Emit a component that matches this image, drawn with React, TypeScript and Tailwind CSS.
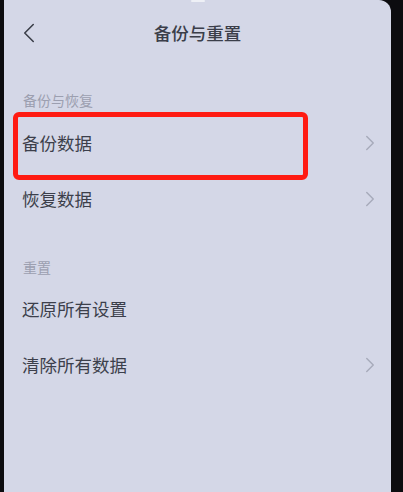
import { ChevronLeft, ChevronRight } from "lucide-react";

const font = { fontFamily: '"Noto Sans CJK SC", "Noto Sans", sans-serif' };

function Row({ label, arrow, marked }: { label: string; arrow?: boolean; marked?: boolean }) {
  return (
    <div className="relative flex h-[56px] items-center justify-between pl-[18px] pr-[8px]">
      <span className="text-[17.5px] leading-none text-[#3c3f4b]">{label}</span>
      {arrow && <ChevronRight className="size-[26px] text-[#a7aaba]" strokeWidth={1.3} />}
      {marked && (
        <div className="absolute left-[9px] top-[-3px] h-[68px] w-[295px] rounded-[6px] border-[5px] border-[#ff1b12]" />
      )}
    </div>
  );
}

function Section({ title }: { title: string }) {
  return (
    <div className="pl-[19px] text-[14px] leading-[20px] text-[#9c9fb0]">{title}</div>
  );
}

export default function App() {
  return (
    <div className="flex h-[492px] w-[403px] bg-[#0c0c0f]" style={font}>
      <div className="relative ml-[4px] flex w-[387px] flex-col rounded-tr-[12px] bg-[#d4d7e7]">
        <div className="absolute left-[187px] top-0 h-[2px] w-[14px] rounded-full bg-[#eef0f6]" />
        <div className="relative flex h-[66px] items-center justify-center">
          <ChevronLeft className="absolute left-[8px] size-[34px] text-[#3a3d48]" strokeWidth={1.1} />
          <span className="text-[17.5px] font-medium text-[#3b3e4a]">备份与重置</span>
        </div>
        <div className="pt-[24px]">
          <Section title="备份与恢复" />
        </div>
        <div className="pt-[5px]">
          <Row label="备份数据" arrow marked />
          <Row label="恢复数据" arrow />
        </div>
        <div className="pt-[30px]">
          <Section title="重置" />
        </div>
        <div className="pt-[4px]">
          <Row label="还原所有设置" />
          <Row label="清除所有数据" arrow />
        </div>
      </div>
    </div>
  );
}
